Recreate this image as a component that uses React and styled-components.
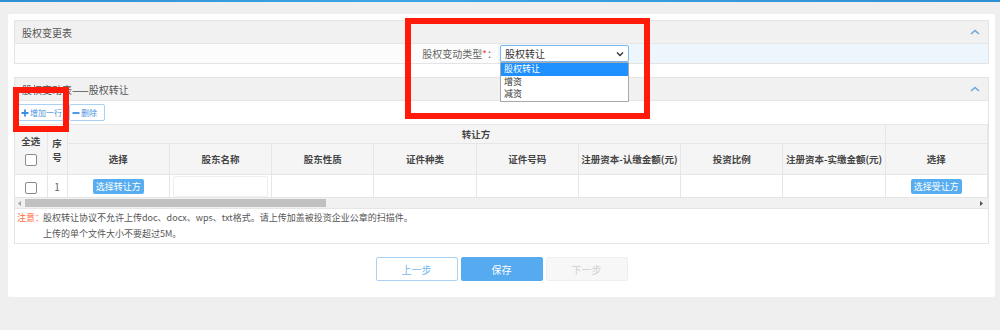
import React from "react";
import styled, { createGlobalStyle } from "styled-components";

const GlobalStyle = createGlobalStyle`
  body {
    margin: 0;
    background: #efefef;
    font-family: "Noto Sans CJK SC", "Noto Sans", sans-serif;
    font-size: 10px;
    color: #555;
  }
`;

const TopLine = styled.div`
  height: 2px;
  background: linear-gradient(90deg, #2f8fd3, #3aa6e8 40%, #2f8fd3);
`;

const Page = styled.div`
  padding: 12px 5px 34px 8px;
`;

const Card = styled.div`
  position: relative;
  background: #fff;
  border-radius: 2px;
  padding: 6px 6px 16px 6px;
`;

const Panel = styled.div`
  border: 1px solid #e4e4e4;
  margin-top: ${(p) => (p.$gap ? "13px" : "0")};
`;

const PanelHeader = styled.div`
  height: 22px;
  background: #f1f1f1;
  border-bottom: 1px solid #e6e6e6;
  padding: 0 8px 0 7px;
  display: flex;
  align-items: center;
  justify-content: space-between;
  color: #555;
`;

const FormRow = styled.div`
  display: grid;
  grid-template-columns: 483px 1fr;
  height: 19px;
`;

const FieldLabel = styled.div`
  background: #fcfcfc;
  text-align: right;
  line-height: 19px;
  color: #666;
  padding-right: 1px;

  em {
    color: #ff3b30;
    font-style: normal;
  }
`;

const FieldValue = styled.div`
  background: #eef6fd;
  padding: 1px 2px;
`;

const SelectBox = styled.div`
  position: relative;
  width: 129px;
  height: 17px;
  box-sizing: border-box;
  border: 1px solid #7db6ec;
  border-radius: 2px;
  background: #fff;
  display: flex;
  align-items: center;
  justify-content: space-between;
  padding: 0 4px;
  color: #333;
`;

const OptionList = styled.div`
  position: absolute;
  top: 16px;
  left: -1px;
  width: 129px;
  box-sizing: border-box;
  border: 1px solid #a9a9a9;
  background: #fff;
  z-index: 2;
`;

const Option = styled.div`
  height: 12.5px;
  line-height: 12.5px;
  font-size: 9px;
  padding: 0 3px;
  overflow: hidden;
  color: ${(p) => (p.$active ? "#fff" : "#333")};
  background: ${(p) => (p.$active ? "#1e90ff" : "#fff")};
`;

const Toolbar = styled.div`
  display: flex;
  gap: 5px;
  padding: 3px 4px 3px 3px;
  border-bottom: 1px solid #e8e8e8;
`;

const ToolButton = styled.div`
  width: ${(p) => p.$w}px;
  height: 17px;
  box-sizing: border-box;
  border: 1px solid #a9d0f5;
  border-radius: 2px;
  color: #4b95e0;
  font-size: 8px;
  white-space: nowrap;
  padding: 0 0 0 2px;
  display: flex;
  align-items: center;
  gap: 1px;
`;

const Table = styled.table`
  width: 100%;
  border-collapse: collapse;
  table-layout: fixed;
`;

const Th = styled.th`
  background: #f5f5f5;
  border: 1px solid #e6e6e6;
  border-top: none;
  font-weight: bold;
  color: #444;
  font-size: 9.5px;
  text-align: center;
  padding: 0 2px;
  height: ${(p) => p.$h || 18}px;
  white-space: ${(p) => (p.$wrap ? "normal" : "nowrap")};
  line-height: 14px;
  &:first-child {
    border-left: none;
  }
`;

const Td = styled.td`
  border: 1px solid #e6e6e6;
  height: 22px;
  text-align: center;
  color: #666;
  padding: 0 3px;
  &:first-child {
    border-left: none;
  }
`;

const CheckBox = styled.span`
  display: inline-block;
  width: 10px;
  height: 10px;
  border: 1px solid #8a8a8a;
  border-radius: 2px;
  background: #fff;
  margin-top: ${(p) => p.$mt || 0}px;
  vertical-align: middle;
`;

const PickButton = styled.span`
  display: inline-block;
  background: #57adf0;
  color: #fff;
  font-size: 9px;
  line-height: 15px;
  padding: 0 3px;
  border-radius: 2px;
`;

const TextInput = styled.div`
  height: 19px;
  border: 1px solid #efefef;
  border-radius: 2px;
`;

const ScrollBar = styled.div`
  height: 10px;
  background: #f1f1f1;
  display: flex;
  align-items: center;
  justify-content: space-between;
  padding-right: 2px;
`;

const ScrollArrow = styled.span`
  width: 10px;
  display: flex;
  justify-content: center;
`;

const ScrollThumb = styled.div`
  width: 301px;
  height: 8px;
  background: #c1c1c1;
  margin-right: auto;
`;

const Note = styled.div`
  border-top: 1px solid #e6e6e6;
  padding: 1px 0 1px 2px;
  display: grid;
  grid-template-columns: 26px 1fr;
  line-height: 16px;
  color: #555;
  font-size: 9px;
  white-space: nowrap;

  b {
    color: #ff6a3d;
    font-weight: normal;
  }
`;

const Actions = styled.div`
  display: flex;
  justify-content: center;
  gap: 3px;
  margin-top: 13px;
`;

const ActionButton = styled.div`
  width: 82px;
  height: 24px;
  box-sizing: border-box;
  border-radius: 2px;
  display: flex;
  align-items: center;
  justify-content: center;
  font-size: 10px;
  border: 1px solid ${(p) => ({ primary: "#55aaf0", ghost: "#a9d2f6", disabled: "#efefef" }[p.$kind])};
  background: ${(p) => ({ primary: "#55aaf0", ghost: "#fff", disabled: "#f7f7f7" }[p.$kind])};
  color: ${(p) => ({ primary: "#fff", ghost: "#72b6ee", disabled: "#cfcfcf" }[p.$kind])};
`;

const Highlight = styled.div`
  position: absolute;
  border: 6px solid #ff1a0a;
  pointer-events: none;
  z-index: 3;
`;

const ChevronUp = () => (
  <svg width="10" height="6" viewBox="0 0 10 6">
    <path d="M1 5 L5 1.5 L9 5" fill="none" stroke="#6fa6dc" strokeWidth="1.6" />
  </svg>
);

const ChevronDown = () => (
  <svg width="8" height="6" viewBox="0 0 8 6">
    <path d="M1 1.5 L4 4.5 L7 1.5" fill="none" stroke="#333" strokeWidth="1.4" />
  </svg>
);

const headCols = [
  "选择",
  "股东名称",
  "股东性质",
  "证件种类",
  "证件号码",
  "注册资本-认缴金额(元)",
  "投资比例",
  "注册资本-实缴金额(元)",
];

export default function App() {
  return (
    <>
      <GlobalStyle />
      <TopLine />
      <Page>
        <Card>
          <Panel>
            <PanelHeader>
              <span>股权变更表</span>
              <ChevronUp />
            </PanelHeader>
            <FormRow>
              <FieldLabel>
                股权变动类型<em>*</em>：
              </FieldLabel>
              <FieldValue>
                <SelectBox>
                  <span>股权转让</span>
                  <ChevronDown />
                  <OptionList>
                    <Option $active>股权转让</Option>
                    <Option>增资</Option>
                    <Option>减资</Option>
                  </OptionList>
                </SelectBox>
              </FieldValue>
            </FormRow>
          </Panel>

          <Panel $gap>
            <PanelHeader>
              <span>股权变动表——股权转让</span>
              <ChevronUp />
            </PanelHeader>
            <Toolbar>
              <ToolButton $w={46}>
                <svg width="8" height="8" viewBox="0 0 8 8">
                  <path d="M4 0.5 V7.5 M0.5 4 H7.5" stroke="#3c8fe0" strokeWidth="1.8" />
                </svg>
                增加一行
              </ToolButton>
              <ToolButton $w={36}>
                <svg width="8" height="8" viewBox="0 0 8 8">
                  <path d="M0.5 4 H7.5" stroke="#3c8fe0" strokeWidth="1.8" />
                </svg>
                删除
              </ToolButton>
            </Toolbar>
            <Table>
              <colgroup>
                <col style={{ width: 32 }} />
                <col style={{ width: 20 }} />
                {Array.from({ length: 9 }).map((_, i) => (
                  <col key={i} />
                ))}
              </colgroup>
              <thead>
                <tr>
                  <Th rowSpan={2} $h={49}>
                    全选
                    <br />
                    <CheckBox $mt={6} />
                  </Th>
                  <Th rowSpan={2} $h={49} $wrap>
                    序号
                  </Th>
                  <Th colSpan={8}>转让方</Th>
                  <Th />
                </tr>
                <tr>
                  {headCols.map((h) => (
                    <Th key={h} $h={30}>
                      {h}
                    </Th>
                  ))}
                  <Th $h={30}>选择</Th>
                </tr>
              </thead>
              <tbody>
                <tr>
                  <Td>
                    <CheckBox />
                  </Td>
                  <Td>1</Td>
                  <Td>
                    <PickButton>选择转让方</PickButton>
                  </Td>
                  <Td>
                    <TextInput />
                  </Td>
                  <Td />
                  <Td />
                  <Td />
                  <Td />
                  <Td />
                  <Td />
                  <Td>
                    <PickButton>选择受让方</PickButton>
                  </Td>
                </tr>
              </tbody>
            </Table>
            <ScrollBar>
              <ScrollArrow>
                <svg width="4" height="5" viewBox="0 0 4 5">
                  <path d="M3 0 L0 2.5 L3 5 Z" fill="#a3a3a3" />
                </svg>
              </ScrollArrow>
              <ScrollThumb />
              <ScrollArrow>
                <svg width="4" height="5" viewBox="0 0 4 5">
                  <path d="M1 0 L4 2.5 L1 5 Z" fill="#505050" />
                </svg>
              </ScrollArrow>
            </ScrollBar>
            <Note>
              <b>注意：</b>
              <span>股权转让协议不允许上传doc、docx、wps、txt格式。请上传加盖被投资企业公章的扫描件。</span>
              <span />
              <span>上传的单个文件大小不要超过5M。</span>
            </Note>
          </Panel>

          <Actions>
            <ActionButton $kind="ghost">上一步</ActionButton>
            <ActionButton $kind="primary">保存</ActionButton>
            <ActionButton $kind="disabled">下一步</ActionButton>
          </Actions>

          <Highlight style={{ left: 397, top: 4, width: 233, height: 89 }} />
          <Highlight style={{ left: 5, top: 73, width: 44, height: 33 }} />
        </Card>
      </Page>
    </>
  );
}
